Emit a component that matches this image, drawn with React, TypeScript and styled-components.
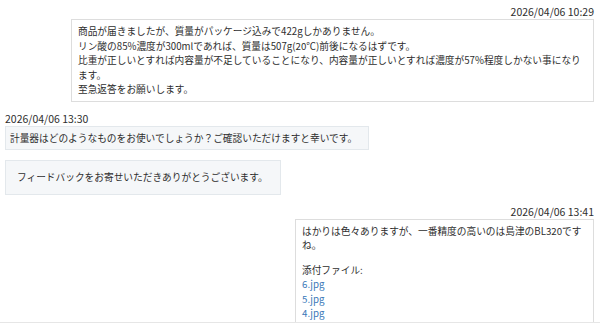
import styled, { createGlobalStyle } from "styled-components";

type Side = "left" | "right";
type Tone = "plain" | "shaded" | "notice";

const GlobalStyle = createGlobalStyle`
  html, body {
    margin: 0;
    padding: 0;
    background: #ffffff;
  }
  body {
    font-family: "Noto Sans CJK JP", "Noto Sans", sans-serif;
    color: #2e2e2e;
  }
`;

const Thread = styled.div`
  height: 323px;
  overflow: hidden;
  border-bottom: 1px solid #e6e6e6;
  padding: 5px 6px 0 5px;
  box-sizing: border-box;
  display: flex;
  flex-direction: column;
  gap: 10px;
`;

const Group = styled.div<{ $side: Side }>`
  display: flex;
  flex-direction: column;
  align-items: ${(p) => (p.$side === "right" ? "flex-end" : "flex-start")};
`;

const Stamp = styled.div`
  font-size: 10.5px;
  line-height: 14px;
`;

const pad = {
  plain: "4px 6px",
  shaded: "4px 4px",
  notice: "9px 8px 9px 11px",
};

const Bubble = styled.div<{ $tone: Tone; $width: number }>`
  box-sizing: border-box;
  width: ${(p) => p.$width}px;
  font-size: 9.7px;
  line-height: 14.5px;
  border: 1px solid ${(p) => (p.$tone === "plain" ? "#dddddd" : "#e3e8ec")};
  background: ${(p) => (p.$tone === "plain" ? "#ffffff" : "#f5f7f9")};
  padding: ${(p) => pad[p.$tone]};
`;

const Line = styled.div``;

const Para = styled.p`
  margin: 0 0 10px;
  &:last-child {
    margin-bottom: 0;
  }
`;

const Attach = styled.a`
  display: block;
  color: #3a78b8;
  text-decoration: none;
`;

export default function App() {
  return (
    <>
      <GlobalStyle />
      <Thread>
        <Group $side="right">
          <Stamp>2026/04/06 10:29</Stamp>
          <Bubble $tone="plain" $width={523}>
            <Line>商品が届きましたが、質量がパッケージ込みで422gしかありません。</Line>
            <Line>リン酸の85%濃度が300mlであれば、質量は507g(20℃)前後になるはずです。</Line>
            <Line>
              比重が正しいとすれば内容量が不足していることになり、内容量が正しいとすれば濃度が57%程度しかない事になります。
            </Line>
            <Line>至急返答をお願いします。</Line>
          </Bubble>
        </Group>
        <Group $side="left">
          <Stamp>2026/04/06 13:30</Stamp>
          <Bubble $tone="shaded" $width={364}>
            計量器はどのようなものをお使いでしょうか？ご確認いただけますと幸いです。
          </Bubble>
        </Group>
        <Group $side="left">
          <Bubble $tone="notice" $width={276}>
            フィードバックをお寄せいただきありがとうございます。
          </Bubble>
        </Group>
        <Group $side="right">
          <Stamp>2026/04/06 13:41</Stamp>
          <Bubble $tone="plain" $width={299}>
            <Para>はかりは色々ありますが、一番精度の高いのは島津のBL320ですね。</Para>
            <Para>
              添付ファイル:
              <Attach href="#">6.jpg</Attach>
              <Attach href="#">5.jpg</Attach>
              <Attach href="#">4.jpg</Attach>
            </Para>
          </Bubble>
        </Group>
      </Thread>
    </>
  );
}
